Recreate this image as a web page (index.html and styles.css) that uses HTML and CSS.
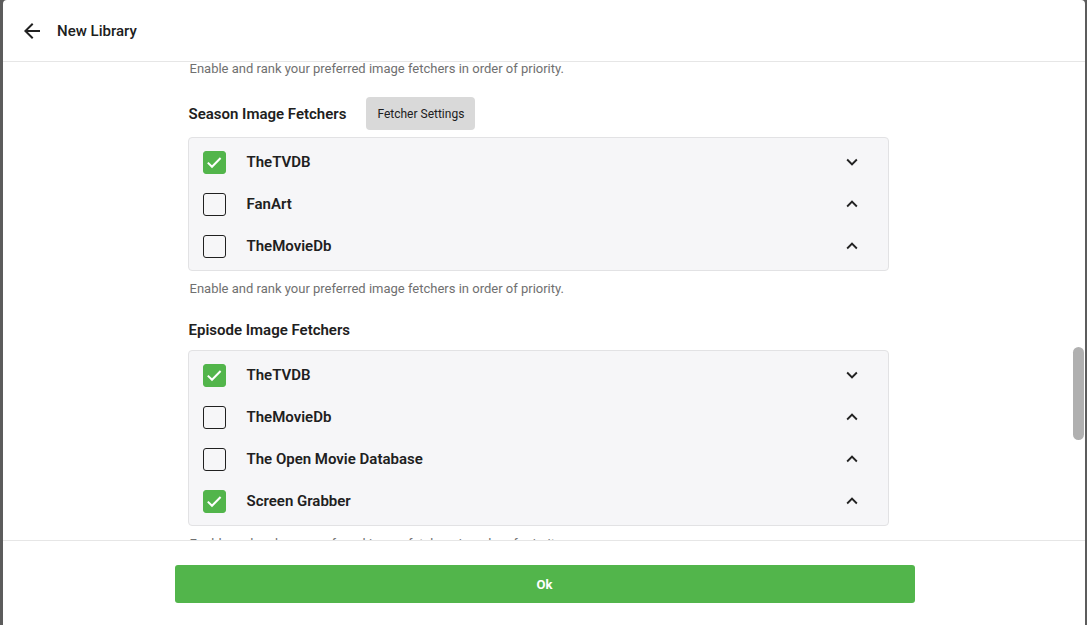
FILE: index.html
```html
<!DOCTYPE html>
<html>
<head>
<meta charset="utf-8">
<link rel="stylesheet" href="styles.css">
</head>
<body>
<div class="dialog">
  <header class="dlg-header">
    <button class="back-btn" aria-label="Back">
      <svg width="24" height="24" viewBox="0 0 24 24"><path d="M20 11H7.83l5.59-5.59L12 4l-8 8 8 8 1.41-1.41L7.83 13H20v-2z" fill="#222"/></svg>
    </button>
    <h1 class="dlg-title">New Library</h1>
  </header>

  <div class="dlg-body">
    <div class="scroller">
      <div class="column">
        <div class="desc desc-top">Enable and rank your preferred image fetchers in order of priority.</div>

        <div class="section-head">
          <h2 class="section-title">Season Image Fetchers</h2>
          <button class="fetcher-btn">Fetcher Settings</button>
        </div>
        <div class="list">
          <div class="row">
            <span class="cb checked"><svg width="21" height="21" viewBox="0 0 21 21"><path d="M3.8 10.6l4.2 4.2 8.6-8.8" fill="none" stroke="#fff" stroke-width="2"/></svg></span>
            <span class="label">TheTVDB</span>
            <svg class="chev" width="22" height="22" viewBox="0 0 24 24"><path d="M16.59 8.59L12 13.17 7.41 8.59 6 10l6 6 6-6z" fill="#222"/></svg>
          </div>
          <div class="row">
            <span class="cb"></span>
            <span class="label">FanArt</span>
            <svg class="chev" width="22" height="22" viewBox="0 0 24 24"><path d="M12 8l-6 6 1.41 1.41L12 10.83l4.59 4.58L18 14z" fill="#222"/></svg>
          </div>
          <div class="row">
            <span class="cb"></span>
            <span class="label">TheMovieDb</span>
            <svg class="chev" width="22" height="22" viewBox="0 0 24 24"><path d="M12 8l-6 6 1.41 1.41L12 10.83l4.59 4.58L18 14z" fill="#222"/></svg>
          </div>
        </div>
        <div class="desc">Enable and rank your preferred image fetchers in order of priority.</div>

        <div class="section-head">
          <h2 class="section-title">Episode Image Fetchers</h2>
        </div>
        <div class="list">
          <div class="row">
            <span class="cb checked"><svg width="21" height="21" viewBox="0 0 21 21"><path d="M3.8 10.6l4.2 4.2 8.6-8.8" fill="none" stroke="#fff" stroke-width="2"/></svg></span>
            <span class="label">TheTVDB</span>
            <svg class="chev" width="22" height="22" viewBox="0 0 24 24"><path d="M16.59 8.59L12 13.17 7.41 8.59 6 10l6 6 6-6z" fill="#222"/></svg>
          </div>
          <div class="row">
            <span class="cb"></span>
            <span class="label">TheMovieDb</span>
            <svg class="chev" width="22" height="22" viewBox="0 0 24 24"><path d="M12 8l-6 6 1.41 1.41L12 10.83l4.59 4.58L18 14z" fill="#222"/></svg>
          </div>
          <div class="row">
            <span class="cb"></span>
            <span class="label">The Open Movie Database</span>
            <svg class="chev" width="22" height="22" viewBox="0 0 24 24"><path d="M12 8l-6 6 1.41 1.41L12 10.83l4.59 4.58L18 14z" fill="#222"/></svg>
          </div>
          <div class="row">
            <span class="cb checked"><svg width="21" height="21" viewBox="0 0 21 21"><path d="M3.8 10.6l4.2 4.2 8.6-8.8" fill="none" stroke="#fff" stroke-width="2"/></svg></span>
            <span class="label">Screen Grabber</span>
            <svg class="chev" width="22" height="22" viewBox="0 0 24 24"><path d="M12 8l-6 6 1.41 1.41L12 10.83l4.59 4.58L18 14z" fill="#222"/></svg>
          </div>
        </div>
        <div class="desc">Enable and rank your preferred image fetchers in order of priority.</div>
      </div>
    </div>
    <div class="track"><div class="thumb"></div></div>
  </div>

  <footer class="dlg-footer">
    <button class="ok-btn">Ok</button>
  </footer>
</div>
</body>
</html>
```

FILE: styles.css
```css
* { box-sizing: border-box; }
html, body { height: 100%; }
body {
  margin: 0;
  background: #5c5c5c;
  font-family: Roboto, "Noto Sans", "Liberation Sans", sans-serif;
  color: #202020;
  overflow: hidden;
}
.dialog {
  margin-left: 3px;
  width: 1082px;
  height: 625px;
  background: #fff;
  border-radius: 4px 4px 0 0;
  display: flex;
  flex-direction: column;
}
.dlg-header {
  height: 62px;
  flex: none;
  display: flex;
  align-items: center;
  padding-left: 17px;
  border-bottom: 1px solid #e6e6e6;
}
.back-btn {
  border: 0;
  background: none;
  padding: 0;
  width: 24px;
  height: 24px;
  display: flex;
}
.dlg-title {
  margin: 0 0 0 13px;
  font-size: 15px;
  font-weight: 500;
  color: #202020;
}
.dlg-body {
  flex: 1;
  display: flex;
  min-height: 0;
  border-bottom: 1px solid #e6e6e6;
}
.scroller {
  flex: 1;
  overflow: hidden;
}
.column {
  width: 701px;
  margin: 0 auto;
}
.desc {
  font-size: 13px;
  line-height: 18px;
  color: #707070;
  padding-left: 2px;
  margin-top: 9px;
}
.desc-top { margin-top: -2px; }
.section-head {
  display: flex;
  align-items: center;
  min-height: 26px;
  margin: 19px 0 7px;
  padding-left: 1px;
}
.section-title {
  margin: 0;
  font-size: 15px;
  font-weight: 600;
  line-height: 26px;
  color: #202020;
}
.fetcher-btn {
  margin-left: 20px;
  border: 0;
  background: #d9d9d9;
  border-radius: 4px;
  height: 33px;
  padding: 0 11px;
  font-family: inherit;
  font-size: 12px;
  color: #202020;
}
.list {
  background: #f6f6f8;
  border: 1px solid #e2e2e4;
  border-radius: 4px;
  padding: 3px 0;
}
.row {
  height: 42px;
  display: flex;
  align-items: center;
  padding-left: 14px;
  padding-right: 25px;
}
.cb {
  width: 23px;
  height: 23px;
  border: 1.5px solid #202020;
  border-radius: 3px;
  display: flex;
  align-items: center;
  justify-content: center;
  flex: none;
}
.cb.checked {
  background: #52b54b;
  border-color: #52b54b;
}
.label {
  margin-left: 21px;
  font-size: 15px;
  font-weight: 600;
  color: #202020;
  flex: 1;
}
.chev { flex: none; }
.track {
  width: 12px;
  flex: none;
  padding-top: 285px;
}
.thumb {
  width: 11px;
  height: 93px;
  border-radius: 6px;
  background: #b0b0b0;
}
.dlg-footer {
  height: 84px;
  flex: none;
  display: flex;
  justify-content: center;
  padding-top: 24px;
  padding-left: 1px;
}
.ok-btn {
  width: 740px;
  height: 38px;
  border: 0;
  border-radius: 3px;
  background: #52b54b;
  color: #fff;
  font-family: inherit;
  font-size: 13px;
  font-weight: 700;
}
```
